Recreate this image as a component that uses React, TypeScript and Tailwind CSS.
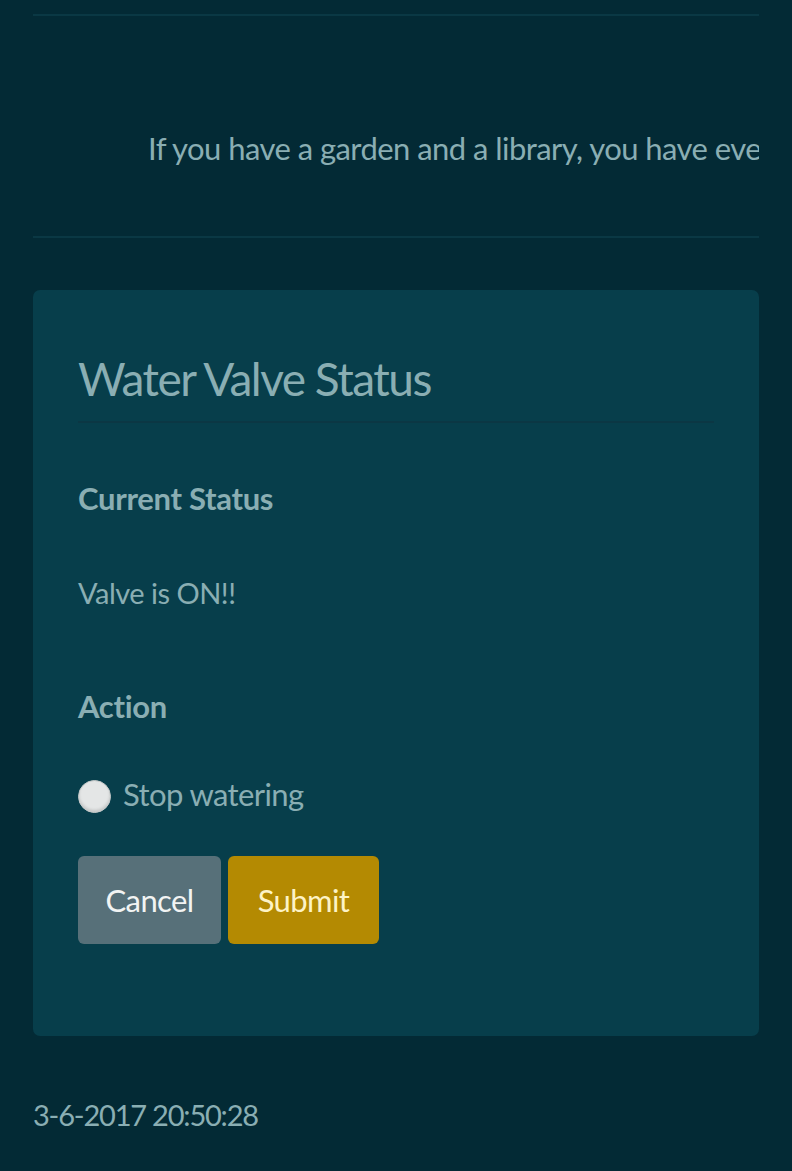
import { useState } from 'react'

export default function App() {
  const [stop, setStop] = useState(false)

  return (
    <div className="min-h-[1171px] w-full bg-[#032a35] text-[#8aaeb3] font-['Lato','Noto_Sans',sans-serif] px-[33px] pt-[14px]">
      <div className="h-[2px] bg-[#0a3844]" />
      <div className="h-[220px] overflow-hidden flex items-center pl-[115px]">
        <p className="whitespace-nowrap text-[31px] tracking-[-0.55px] leading-none pt-[44px]">
          If you have a garden and a library, you have everything you need.
        </p>
      </div>
      <div className="h-[2px] bg-[#0a3844]" />

      <div className="mt-[52px] h-[746px] rounded-[7px] bg-[#073e4b] px-[45px] pt-[66px]">
        <h2 className="text-[46px] leading-none tracking-[-1.5px] pb-[19px] border-b-2 border-[#0b3744]">Water Valve Status</h2>

        <h3 className="mt-[60px] text-[31px] font-bold leading-none tracking-[-0.3px]">Current Status</h3>
        <p className="mt-[64px] text-[29px] leading-none tracking-[-0.5px]">Valve is ON!!</p>

        <h3 className="mt-[84px] text-[31px] font-bold leading-none tracking-[-0.3px]">Action</h3>

        <label className="mt-[58px] flex items-center gap-[12px] cursor-pointer">
          <span
            onClick={() => setStop(!stop)}
            className="h-[33px] w-[33px] rounded-full bg-[#e4e6e6] border border-[#c4c8c8] shadow-[inset_0_-2px_3px_rgba(0,0,0,0.15)] flex items-center justify-center"
          >
            {stop && <span className="h-[14px] w-[14px] rounded-full bg-[#4a6a72]" />}
          </span>
          <span className="text-[31px] leading-none tracking-[-0.6px] -mt-[4px]">Stop watering</span>
        </label>

        <div className="mt-[43px] flex gap-[7px]">
          <button className="h-[88px] w-[143px] rounded-[6px] bg-[#577079] text-[#f2f4f3] text-[31px] tracking-[-0.6px]">Cancel</button>
          <button className="h-[88px] w-[151px] rounded-[6px] bg-[#b48a02] text-[#fdf3c6] text-[31px] tracking-[-0.6px]">Submit</button>
        </div>
      </div>

      <p className="mt-[64px] text-[29px] leading-none tracking-[-1.2px]">3-6-2017 20:50:28</p>
    </div>
  )
}
